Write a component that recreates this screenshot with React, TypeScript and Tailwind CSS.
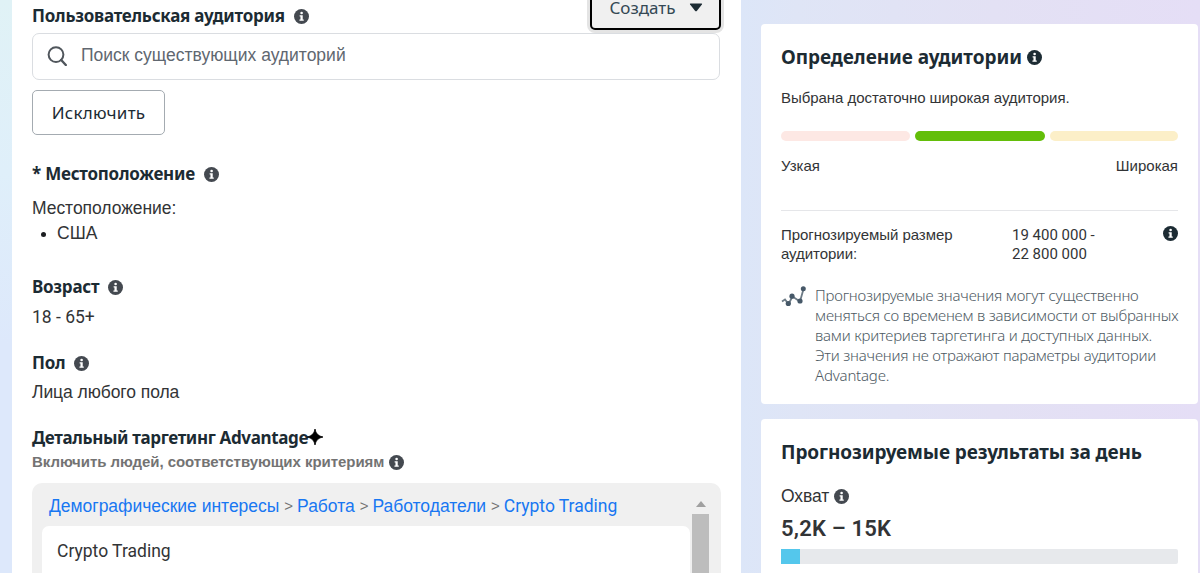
import type { ReactNode } from "react";
import clsx from "clsx";

function InfoIcon({ className = "text-[#444950]" }: { className?: string }) {
  return (
    <svg viewBox="0 0 16 16" className={clsx("size-[15px] shrink-0", className)}>
      <circle cx="8" cy="8" r="8" fill="currentColor" />
      <circle cx="8.1" cy="4.2" r="1.4" fill="#fff" />
      <path d="M6 6.7h3.3v4.4h1.1v1.3H5.8v-1.3h1.1V8H6z" fill="#fff" />
    </svg>
  );
}

function SectionTitle({ children, className }: { children: ReactNode; className?: string }) {
  return (
    <div className={clsx("flex h-6 items-center gap-[9px]", className)}>
      <h3 className="whitespace-nowrap font-['Noto_Sans',sans-serif] text-[17px] font-bold leading-6 tracking-[-0.24px] text-[#1c2b33]">
        {children}
      </h3>
      <InfoIcon />
    </div>
  );
}

function Crumbs() {
  const items = ["Демографические интересы", "Работа", "Работодатели"];
  return (
    <div className="flex h-[43px] items-center gap-1 whitespace-nowrap pl-[17px] pt-[3px] text-[17.5px] tracking-[-0.02px] text-[#1877f2]">
      {items.map((item) => (
        <span key={item} className="flex items-center gap-[5px]">
          {item}
          <span className="text-[15px] text-[#737373]">&gt;</span>
        </span>
      ))}
      <span className="font-['Roboto',sans-serif]">Crypto Trading</span>
    </div>
  );
}

function TargetingForm() {
  return (
    <main className="relative ml-3 h-[573px] w-[729px] shrink-0 overflow-hidden bg-white px-5">
      <div className="flex h-[33px] items-start justify-between">
        <SectionTitle className="mt-1">Пользовательская аудитория</SectionTitle>
        <button className="-mt-[14px] flex h-11 w-[131px] items-center justify-center gap-[13px] rounded-[5px] border-2 border-black bg-[#f0f0f0] pl-px font-['Noto_Sans',sans-serif] text-[17px] leading-5 text-[#344854] shadow-[0_0_0_3px_#e4e4e4]">
          Создать
          <svg viewBox="0 0 14 9" className="-mt-[2px] h-[9px] w-[14px] text-[#1c2b33]">
            <path d="M1.5.5h11q1 0 .4 1L8 7.8q-1 1-2 0L1.1 1.5q-.6-1 .4-1z" fill="currentColor" />
          </svg>
        </button>
      </div>

      <div className="flex h-[47px] w-[688px] items-center gap-[14px] rounded-[7px] border border-[#dadde1] bg-white pl-[14px]">
        <svg viewBox="0 0 20 20" className="-mt-[2px] size-5 text-[#50565c]" fill="none" stroke="currentColor">
          <circle cx="9" cy="8.6" r="7.4" strokeWidth="2" />
          <path d="m14.2 14 4.6 5" strokeWidth="2.4" strokeLinecap="round" />
        </svg>
        <span className="-mt-[2px] text-[17.5px] text-[#606770]">Поиск существующих аудиторий</span>
      </div>

      <button className="mt-[10px] flex h-[45px] w-[133px] items-center justify-center rounded-[5px] border border-[#a4abb1] font-['Noto_Sans',sans-serif] text-[17px] tracking-[0.25px] text-[#1c2b33]">
        Исключить
      </button>

      <SectionTitle className="mt-[27px]">* Местоположение</SectionTitle>
      <p className="mt-[10px] text-[17.5px] leading-6 tracking-[-0.05px]">Местоположение:</p>
      <div className="flex h-[26px] items-center gap-[11px] pl-[9px] text-[17.5px]">
        <span className="mt-[2px] size-[5px] rounded-full bg-[#1c1e21]" />
        США
      </div>

      <SectionTitle className="mt-[29px]">Возраст</SectionTitle>
      <p className="mt-[6px] font-['Roboto',sans-serif] text-[17.5px] leading-6">18 - 65+</p>

      <SectionTitle className="mt-[22px]">Пол</SectionTitle>
      <p className="mt-[5px] text-[17.5px] leading-6 tracking-[-0.07px]">Лица любого пола</p>

      <div className="mt-[22px] flex h-6 items-center">
        <h3 className="whitespace-nowrap font-['Noto_Sans',sans-serif] text-[17px] font-bold leading-6 tracking-[-0.36px] text-[#1c2b33]">
          Детальный таргетинг Advantage
        </h3>
        <svg viewBox="0 0 16 16" className="-ml-px -mt-[2px] size-4 text-black">
          <path d="M8 0q1 6.8 8 8-7 1.200-8 8-1-6.800-8-8 7-1.200 8-8z" fill="currentColor" stroke="currentColor" strokeWidth=".8" />
        </svg>
      </div>
      <div className="flex h-6 items-center gap-[5px]">
        <p className="pt-px text-[15px] font-bold tracking-[-0.05px] text-[#737373]">
          Включить людей, соответствующих критериям
        </p>
        <InfoIcon />
      </div>

      <div className="mt-[9px] flex h-[100px] w-[689px] rounded-[10px] bg-[#f0f0f0]">
        <div className="w-[658px]">
          <Crumbs />
          <div className="ml-[10px] h-[60px] rounded-[7px] bg-white pl-[15px] pt-[13px] font-['Roboto',sans-serif] text-[17.5px] leading-6">
            Crypto Trading
          </div>
        </div>
        <div className="ml-[2px] flex w-[17px] flex-col items-center">
          <svg viewBox="0 0 10 6" className="mt-[18px] h-[6px] w-[10px]">
            <path d="M5 0l5 6H0z" fill="#a0a0a0" />
          </svg>
          <div className="mt-[7px] w-full flex-1 bg-[#bdbdbd]" />
        </div>
      </div>
    </main>
  );
}

function AudienceCard() {
  return (
    <section className="h-[380px] rounded bg-white px-5 pt-5">
      <div className="flex h-[27px] items-center gap-[5px]">
        <h2 className="whitespace-nowrap font-['Noto_Sans',sans-serif] text-[19px] font-bold leading-[27px] tracking-[-0.07px] text-[#1c2b33]">
          Определение аудитории
        </h2>
        <InfoIcon className="text-[#1c2b33]" />
      </div>
      <p className="mt-4 text-[15px] leading-[22px] tracking-[-0.05px]">Выбрана достаточно широкая аудитория.</p>
      <div className="mt-[22px] flex h-[10px] gap-[5px]">
        <div className="w-[129px] rounded-full bg-[#fde8e4]" />
        <div className="w-[130px] rounded-full bg-[#63be09]" />
        <div className="flex-1 rounded-full bg-[#fcefc8]" />
      </div>
      <div className="mt-[14px] flex justify-between text-[15px] leading-[22px]">
        <span>Узкая</span>
        <span>Широкая</span>
      </div>
      <div className="mt-[33px] flex items-start border-t border-[#e5e6e9] pt-[15px] text-[15px] leading-[19px]">
        <p className="-mt-px w-[231px] tracking-[-0.05px]">
          Прогнозируемый размер
          <br />
          аудитории:
        </p>
        <p className="flex-1 font-['Roboto',sans-serif]">
          19 400 000 -
          <br />
          22 800 000
        </p>
        <InfoIcon className="text-[#1c2b33]" />
      </div>
      <div className="mt-[21px] flex gap-[10px]">
        <svg viewBox="0 0 25 21" className="mt-[1px] h-[21px] w-[25px] shrink-0">
          <path d="M1 15.500l3-2 3.500 4.500 4-7.500 7.500 5 3.500-12.500" fill="none" stroke="#6d7b86" strokeWidth="1.800" />
          <g fill="#465868">
            <circle cx="7.300" cy="17.500" r="2.600" />
            <circle cx="11" cy="10.200" r="2.600" />
            <circle cx="19" cy="15" r="2.600" />
            <circle cx="22.300" cy="2.800" r="2.500" />
          </g>
        </svg>
        <p className="-ml-px whitespace-nowrap font-['Noto_Sans',sans-serif] text-[15px] font-light leading-5 tracking-[-0.2px] text-[#4e5a63]">
          Прогнозируемые значения могут существенно
          <br />
          меняться со временем в зависимости от выбранных
          <br />
          вами критериев таргетинга и доступных данных.
          <br />
          Эти значения не отражают параметры аудитории
          <br />
          Advantage.
        </p>
      </div>
    </section>
  );
}

function DailyResultsCard() {
  return (
    <section className="mt-[15px] h-[160px] rounded bg-white px-5 pt-5">
      <h2 className="whitespace-nowrap font-['Noto_Sans',sans-serif] text-[19px] font-bold leading-[27px] tracking-[-0.1px] text-[#1c2b33]">
        Прогнозируемые результаты за день
      </h2>
      <div className="mt-[18px] flex h-6 items-center gap-[5px] text-[17.5px] tracking-[-0.1px]">
        Охват
        <InfoIcon />
      </div>
      <p className="mt-[7px] whitespace-nowrap font-['Roboto',sans-serif] text-[22px] font-semibold leading-7 tracking-[0.2px]">
        5,2K – 15K
      </p>
      <div className="mt-[6px] h-[15px] rounded-r-[2px] bg-[#e7e9ec]">
        <div className="h-full w-[19px] bg-[#54c7ec]" />
      </div>
    </section>
  );
}

export default function App() {
  return (
    <div className="flex h-[573px] w-[1200px] overflow-hidden bg-[linear-gradient(180deg,#e0f2f6_0%,#dfeffa_30%,#dde8fb_60%,#dde8fb_100%)] font-['Liberation_Sans',sans-serif] text-[#323436]">
      <TargetingForm />
      <aside className="h-[573px] min-w-0 flex-1 bg-[linear-gradient(90deg,#dce6f8_0%,#dfe5f6_12%,#e3e1f4_55%,#e5def6_100%)] pl-5 pr-[2px] pt-6">
        <AudienceCard />
        <DailyResultsCard />
      </aside>
    </div>
  );
}
